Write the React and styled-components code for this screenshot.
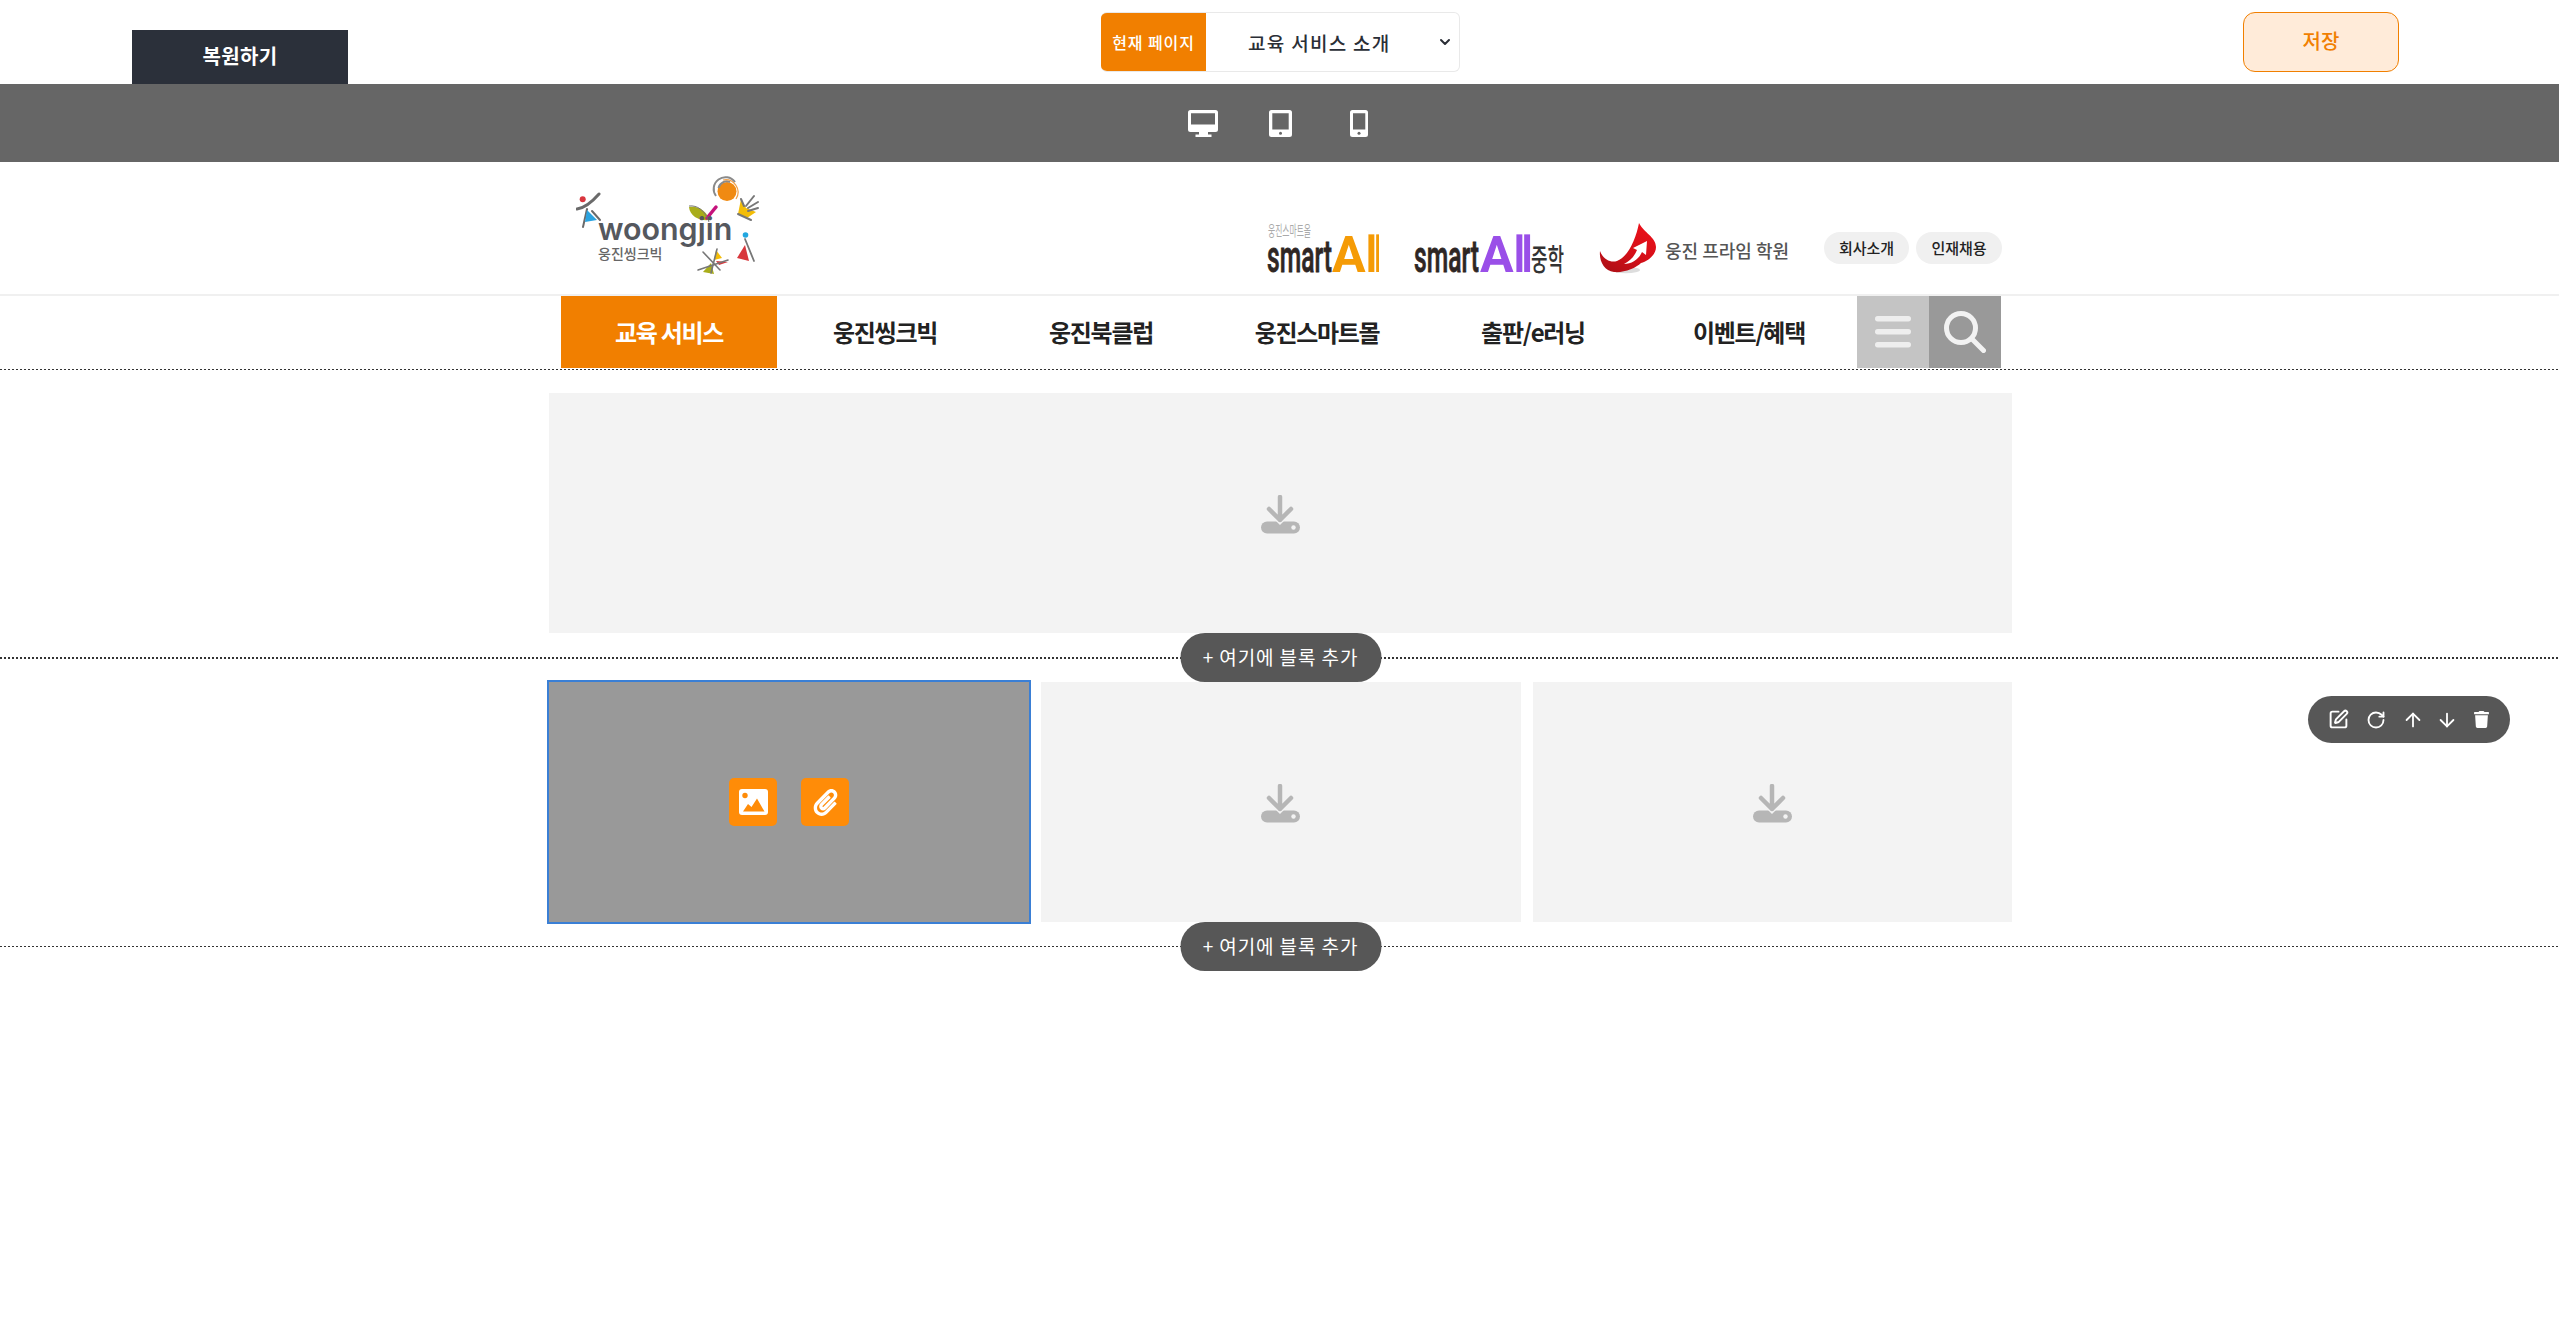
import React from "react";
import styled, { createGlobalStyle } from "styled-components";
import { SquarePen, RotateCw, ArrowUp, ArrowDown, ChevronDown } from "lucide-react";
import { FaTrash, FaPaperclip } from "react-icons/fa";

const FONT = `"Noto Sans CJK KR", "Noto Sans", sans-serif`;

const Global = createGlobalStyle`
  * { box-sizing: border-box; }
  html, body { margin: 0; padding: 0; background: #fff; }
  body { font-family: ${FONT}; color: #222; }
`;

const Page = styled.div`
  position: relative;
  min-height: 1342px;
  background: #fff;
`;

const TopBar = styled.div`
  height: 84px;
  display: grid;
  grid-template-columns: 1fr 359px 1fr;
  padding: 12px 159px 12px 161px;
  background: #fff;
`;

const RestoreButton = styled.button`
  width: 216px;
  height: 54px;
  margin: 18px 0 0 -29px;
  padding: 0 0 3px;
  border: 0;
  background: #2b303a;
  color: #fff;
  font: 700 20px/1 ${FONT};
  letter-spacing: 0.3px;
`;

const PageSelect = styled.div`
  display: flex;
  height: 60px;
  border-radius: 6px;
  overflow: hidden;
  border: 1px solid #e9e9e9;
  border-left: 0;
`;

const PageLabel = styled.div`
  width: 105px;
  margin: -1px 0;
  display: flex;
  align-items: center;
  justify-content: center;
  background: #f17f00;
  color: #fff;
  font-size: 16px;
  font-weight: 500;
  letter-spacing: 0.9px;
  white-space: nowrap;
`;

const PageValue = styled.div`
  flex: 1;
  display: flex;
  align-items: center;
  justify-content: space-between;
  padding: 0 6px 0 42px;
  font-size: 19px;
  font-weight: 500;
  letter-spacing: 1.3px;
  color: #2a2e36;
`;

const SaveButton = styled.button`
  justify-self: end;
  width: 156px;
  height: 60px;
  margin-right: 1px;
  padding: 0 0 3px;
  border: 1px solid #f17f00;
  border-radius: 12px;
  background: #ffebd9;
  color: #f17f00;
  font: 500 20px/1 ${FONT};
`;

const DeviceBar = styled.div`
  height: 78px;
  background: #666;
  display: flex;
  align-items: center;
  justify-content: center;
  gap: 51px;
  padding-right: 3px;
`;

const PhoneSlot = styled.span`
  display: flex;
  margin-left: 7px;
`;

const Header = styled.header`
  height: 134px;
  border-bottom: 2px solid #f0f0f0;
  padding: 12px 0 0 576px;
  display: flex;
  align-items: flex-start;
`;

const BrandGroup = styled.div`
  display: flex;
  align-items: flex-start;
  margin-left: 501px;
  padding-top: 48px;
`;

const MiddleLogo = styled.span`
  display: flex;
  margin: 12px 0 0 35px;
`;

const Prime = styled.div`
  display: flex;
  align-items: flex-start;
  margin-left: 35px;
`;

const PrimeMarkSlot = styled.span`
  display: flex;
  margin-top: 1px;
`;

const PrimeName = styled.span`
  margin: 15px 0 0 9px;
  color: #555;
  font-size: 18px;
  line-height: 26px;
  font-weight: 500;
  letter-spacing: 0;
  white-space: nowrap;
`;

const Pills = styled.div`
  display: flex;
  gap: 7px;
  margin: 10px 0 0 35px;
`;

const Pill = styled.span`
  width: ${(p) => p.$w}px;
  height: 32px;
  padding-bottom: 2px;
  display: flex;
  align-items: center;
  justify-content: center;
  border-radius: 16px;
  background: #f0f0f0;
  color: #222;
  font-size: 15px;
  font-weight: 500;
`;

const Nav = styled.nav`
  height: 72px;
  margin-left: 561px;
  display: flex;
`;

const NavItem = styled.a`
  width: 216px;
  display: flex;
  align-items: center;
  justify-content: center;
  padding-bottom: 2px;
  background: ${(p) => (p.$active ? "#f17f00" : "transparent")};
  color: ${(p) => (p.$active ? "#fff" : "#222")};
  font-size: 24px;
  font-weight: 700;
  letter-spacing: -1.3px;
  white-space: nowrap;
`;

const NavSquare = styled.div`
  width: 72px;
  display: flex;
  align-items: center;
  justify-content: center;
  background: ${(p) => p.$bg};
`;

const dots = (h) => `repeating-linear-gradient(90deg, #333 0 2px, transparent 2px 4px) left bottom / 100% ${h}px no-repeat`;

const Section = styled.section`
  position: relative;
  padding: ${(p) => (p.$first ? "25px 0 26px 549px" : "23px 0 25px 549px")};
  background: ${(p) => dots(p.$first ? 2 : 1)};

  &::before {
    content: "";
    display: ${(p) => (p.$first ? "block" : "none")};
    position: absolute;
    top: 1px;
    left: 0;
    right: 0;
    height: 1px;
    background: ${dots(1)};
  }
`;

const Blocks = styled.div`
  width: 1463px;
  display: grid;
  grid-template-columns: ${(p) => p.$cols};
  gap: 12px;
`;

const Block = styled.div`
  height: 240px;
  display: flex;
  align-items: center;
  justify-content: center;
  gap: 24px;
  background: ${(p) => (p.$selected ? "#999" : "#f3f3f3")};
  outline: ${(p) => (p.$selected ? "2px solid #3a7fd5" : "none")};
`;

const DownloadSlot = styled.span`
  display: flex;
  margin-top: 2px;
`;

const UploadButton = styled.span`
  width: 48px;
  height: 48px;
  display: flex;
  align-items: center;
  justify-content: center;
  background: #ff8c08;
  border-radius: 5px;
  color: #fff;
`;

const AddBlock = styled.button`
  position: absolute;
  left: 50%;
  bottom: ${(p) => (p.$first ? "-23px" : "-24px")};
  transform: translateX(-50%);
  margin-left: 1px;
  width: 201px;
  height: 49px;
  padding: 0 0 3px;
  border: 0;
  border-radius: 25px;
  background: #575757;
  color: #fff;
  font: 400 19px/1 ${FONT};
  letter-spacing: 0.9px;
  white-space: nowrap;
  z-index: 2;
`;

const FloatTools = styled.div`
  position: absolute;
  top: 696px;
  left: 2308px;
  width: 202px;
  height: 47px;
  padding-left: 12px;
  display: flex;
  align-items: center;
  border-radius: 24px;
  background: #575757;
  color: #fff;
`;

const ToolIcon = styled.span`
  width: ${(p) => p.$w}px;
  display: flex;
  align-items: center;
  justify-content: center;
`;

const Desktop = () => (
  <svg width="30" height="27" viewBox="0 0 30 27">
    <path fill="#fff" fillRule="evenodd" d="M2.500 0h25A2.500 2.500 0 0 1 30 2.500v17a2.500 2.500 0 0 1-2.500 2.500H20v2.500h3.500V27h-16v-2.500H11V22H2.500A2.500 2.500 0 0 1 0 19.500v-17A2.500 2.500 0 0 1 2.500 0zM3 3.300V14.500h24V3.300z" />
  </svg>
);

const Tablet = () => (
  <svg width="23" height="27" viewBox="0 0 23 27">
    <path fill="#fff" fillRule="evenodd" d="M2.500 0h18A2.500 2.500 0 0 1 23 2.500v22a2.500 2.500 0 0 1-2.500 2.500h-18A2.500 2.500 0 0 1 0 24.500v-22A2.500 2.500 0 0 1 2.500 0zM3.300 3.300V19.500h16.400V3.300z" />
    <circle cx="11.500" cy="23.200" r="1.500" fill="#666" />
  </svg>
);

const Phone = () => (
  <svg width="18" height="27" viewBox="0 0 18 27">
    <path fill="#fff" fillRule="evenodd" d="M2.500 0h13A2.500 2.500 0 0 1 18 2.500v22a2.500 2.500 0 0 1-2.500 2.500h-13A2.500 2.500 0 0 1 0 24.500v-22A2.500 2.500 0 0 1 2.500 0zM3 3.300V19.500h12.300V3.300z" />
    <circle cx="9" cy="23.200" r="1.500" fill="#666" />
  </svg>
);

const WoongjinLogo = () => (
  <svg width="190" height="104" viewBox="6 2 190 104" aria-label="woongjin">
    <g fill="none" stroke="#6a6a6a" strokeLinecap="round">
      <path d="M7 37 C15 36 22 30 29 22" strokeWidth="3" />
      <path d="M17 37 L13 55" strokeWidth="2" />
      <path d="M22 39 L30 48" strokeWidth="2" />
    </g>
    <circle cx="12.700" cy="27.300" r="3" fill="#d9363e" />
    <path d="M17 38 L27 48 L15 50 Z" fill="#2aa3e0" />

    <circle cx="157" cy="19.500" r="9.500" fill="#f08a12" />
    <g fill="none" stroke="#8a8a8a" strokeWidth="2">
      <path d="M146 24 A11.500 11.500 0 1 1 165 10" />
      <path d="M148.500 16 A8.500 8.500 0 0 1 160 10" />
    </g>
    <path d="M153 8 A12.500 12.500 0 0 1 166 27" fill="none" stroke="#f0a04a" strokeWidth="1.200" />

    <path d="M171 27 L168 42 L177 46 L186 40 L176 36 Z" fill="#f3bd07" />
    <g fill="none" stroke="#777" strokeWidth="2" strokeLinecap="round">
      <path d="M171 27 L174 34" />
      <path d="M176 34 L184 24" />
      <path d="M178 36 L188 30" />
      <path d="M178 39 L188 36" />
      <path d="M168 42 L181 48" />
    </g>

    <path d="M119 35 C128 33 138 40 139 48 C130 49 120 45 119 35 Z" fill="#a9ad1a" />
    <path d="M137 46 L146 35" stroke="#c5127c" strokeWidth="3.500" strokeLinecap="round" />
    <path d="M119 34 C127 33 135 38 139 50" fill="none" stroke="#777" strokeWidth="1" />

    <text transform="translate(28 68) scale(0.98 1)" fontFamily="Inter, sans-serif" fontWeight="600" fontSize="31" fill="#55585e">woongjin</text>
    <text x="28" y="87" fontFamily={FONT} fontWeight="500" fontSize="14" fill="#666">웅진씽크빅</text>

    <circle cx="175.500" cy="63" r="2.800" fill="#22a7e0" />
    <path d="M175 73 L167 86 L179 89 Z" fill="#d8373c" />
    <path d="M175 67 L184 89" fill="none" stroke="#777" strokeWidth="1.800" strokeLinecap="round" />

    <path d="M146 78 L152 86 L144 88 Z" fill="#f3bd07" />
    <path d="M146 89 L158 90 L149 93 Z" fill="#d8373c" />
    <path d="M133 100 L141 91 L144 102 Z" fill="#a9ad1a" />
    <g fill="none" stroke="#777" strokeWidth="1.600" strokeLinecap="round">
      <path d="M133 80 L150 98" />
      <path d="M147 77 L141 101" />
      <path d="M128 98 L158 88" />
    </g>
  </svg>
);

const SmartWord = ({ y }) => (
  <text transform={`translate(0 ${y}) scale(0.56 1)`} fontFamily="Roboto, sans-serif" fontWeight="500" fontSize="44" fill="#2e2624" stroke="#2e2624" strokeWidth="0.8">smart</text>
);

const AllWord = ({ x, y, color }) => (
  <>
    <text x={x} y={y} fontFamily="Roboto, sans-serif" fontWeight="700" fontSize="50" fill={color}>A</text>
    <text x={x + 33} y={y} fontFamily="Roboto, sans-serif" fontWeight="500" fontSize="50" letterSpacing="-5" fill={color}>ll</text>
  </>
);

const SmartAll = () => (
  <svg width="112" height="52" viewBox="0 0 112 52" aria-label="smartAll">
    <text transform="translate(1 14) scale(0.52 1)" fontFamily={FONT} fontSize="15" fill="#aaa">웅진스마트올</text>
    <SmartWord y={50} />
    <AllWord x={65} y={50} color="#f59b06" />
  </svg>
);

const SmartAllMiddle = () => (
  <svg width="150" height="40" viewBox="0 0 150 40" aria-label="smartAll 중학">
    <SmartWord y={38} />
    <AllWord x={66} y={38} color="#9a4fe8" />
    <text transform="translate(117 36) scale(0.6 1)" fontFamily={FONT} fontWeight="500" fontSize="30" fill="#333">중학</text>
  </svg>
);

const PrimeMark = () => (
  <svg width="57" height="51" viewBox="13 8 57 51">
    <defs>
      <linearGradient id="primeRed" x1="0" y1="1" x2="0.6" y2="0">
        <stop offset="0" stopColor="#a80f16" />
        <stop offset="0.5" stopColor="#d20f18" />
        <stop offset="1" stopColor="#e8101a" />
      </linearGradient>
    </defs>
    <ellipse cx="40" cy="55" rx="14" ry="3.200" fill="#ddd" />
    <path d="M53 8 C58 18 70 22 70 32 C70 40 62 46 55 48 C50 53 38 58 28 57 C18 56 13 46 14 36 C17 44 24 48 31 46 C42 42 50 24 53 8 Z" fill="url(#primeRed)" />
    <path d="M61 26 L47 33 L51 35 C48 42 44 46 38 49 C46 49 53 44 56 37 L60 40 Z" fill="#fff" />
  </svg>
);

const Download = () => (
  <DownloadSlot>
    <svg width="40" height="39" viewBox="0 0 40 39">
      <rect x="0" y="26.500" width="39" height="12" rx="6" fill="#b6b6b6" />
      <path d="M8 14 L19 25 L30 14" fill="none" stroke="#f3f3f3" strokeWidth="7" />
      <path d="M19 2 V25 M8 14 L19 25 L30 14" fill="none" stroke="#b6b6b6" strokeWidth="4.500" strokeLinecap="round" strokeLinejoin="round" />
      <circle cx="32.500" cy="32.500" r="2.200" fill="#f3f3f3" />
    </svg>
  </DownloadSlot>
);

const ImageIcon = () => (
  <svg width="29" height="26" viewBox="0 0 29 26">
    <rect width="29" height="26" rx="3" fill="#fff" />
    <circle cx="6" cy="6.500" r="2.700" fill="#ff8c08" />
    <path d="M4 22.500 L9 15 L12.500 18 L18 9.500 L25.500 22.500 Z" fill="#ff8c08" strokeLinejoin="round" />
  </svg>
);

const Bars = () => (
  <svg width="36" height="32" viewBox="0 0 36 32">
    <g fill="#eee">
      <rect y="0" width="36" height="5.500" rx="2.700" />
      <rect y="13" width="36" height="5.500" rx="2.700" />
      <rect y="26" width="36" height="5.500" rx="2.700" />
    </g>
  </svg>
);

const Search = () => (
  <svg width="42" height="42" viewBox="0 0 42 42">
    <circle cx="17" cy="17" r="14.500" fill="none" stroke="#f2f2f2" strokeWidth="5" />
    <path d="M28 28 L39.500 39.500" stroke="#f2f2f2" strokeWidth="5" strokeLinecap="round" />
  </svg>
);

const navItems = ["교육 서비스", "웅진씽크빅", "웅진북클럽", "웅진스마트몰", "출판/e러닝", "이벤트/혜택"];

export default function App() {
  return (
    <Page>
      <Global />
      <TopBar>
        <div><RestoreButton>복원하기</RestoreButton></div>
        <PageSelect>
          <PageLabel>현재 페이지</PageLabel>
          <PageValue>
            교육 서비스 소개
            <ChevronDown size={16} strokeWidth={3} />
          </PageValue>
        </PageSelect>
        <SaveButton>저장</SaveButton>
      </TopBar>
      <DeviceBar>
        <Desktop />
        <Tablet />
        <PhoneSlot><Phone /></PhoneSlot>
      </DeviceBar>
      <Header>
        <WoongjinLogo />
        <BrandGroup>
          <SmartAll />
          <MiddleLogo><SmartAllMiddle /></MiddleLogo>
          <Prime>
            <PrimeMarkSlot><PrimeMark /></PrimeMarkSlot>
            <PrimeName>웅진 프라임 학원</PrimeName>
            <Pills>
              <Pill $w={85}>회사소개</Pill>
              <Pill $w={86}>인재채용</Pill>
            </Pills>
          </Prime>
        </BrandGroup>
      </Header>
      <Nav>
        {navItems.map((n, i) => (
          <NavItem key={n} $active={i === 0}>{n}</NavItem>
        ))}
        <NavSquare $bg="#c4c4c4"><Bars /></NavSquare>
        <NavSquare $bg="#999"><Search /></NavSquare>
      </Nav>
      <Section $first>
        <Blocks $cols="1fr">
          <Block><Download /></Block>
        </Blocks>
        <AddBlock $first>+ 여기에 블록 추가</AddBlock>
      </Section>
      <Section>
        <Blocks $cols="480px 480px 479px">
          <Block $selected>
            <UploadButton><ImageIcon /></UploadButton>
            <UploadButton><FaPaperclip size={27} /></UploadButton>
          </Block>
          <Block><Download /></Block>
          <Block><Download /></Block>
        </Blocks>
        <AddBlock>+ 여기에 블록 추가</AddBlock>
      </Section>
      <FloatTools>
        <ToolIcon $w={37}><SquarePen size={21} strokeWidth={2.2} /></ToolIcon>
        <ToolIcon $w={38}><RotateCw size={20} strokeWidth={2.2} /></ToolIcon>
        <ToolIcon $w={35}><ArrowUp size={22} strokeWidth={2} /></ToolIcon>
        <ToolIcon $w={34}><ArrowDown size={22} strokeWidth={2} /></ToolIcon>
        <ToolIcon $w={35}><FaTrash size={17} /></ToolIcon>
      </FloatTools>
    </Page>
  );
}
